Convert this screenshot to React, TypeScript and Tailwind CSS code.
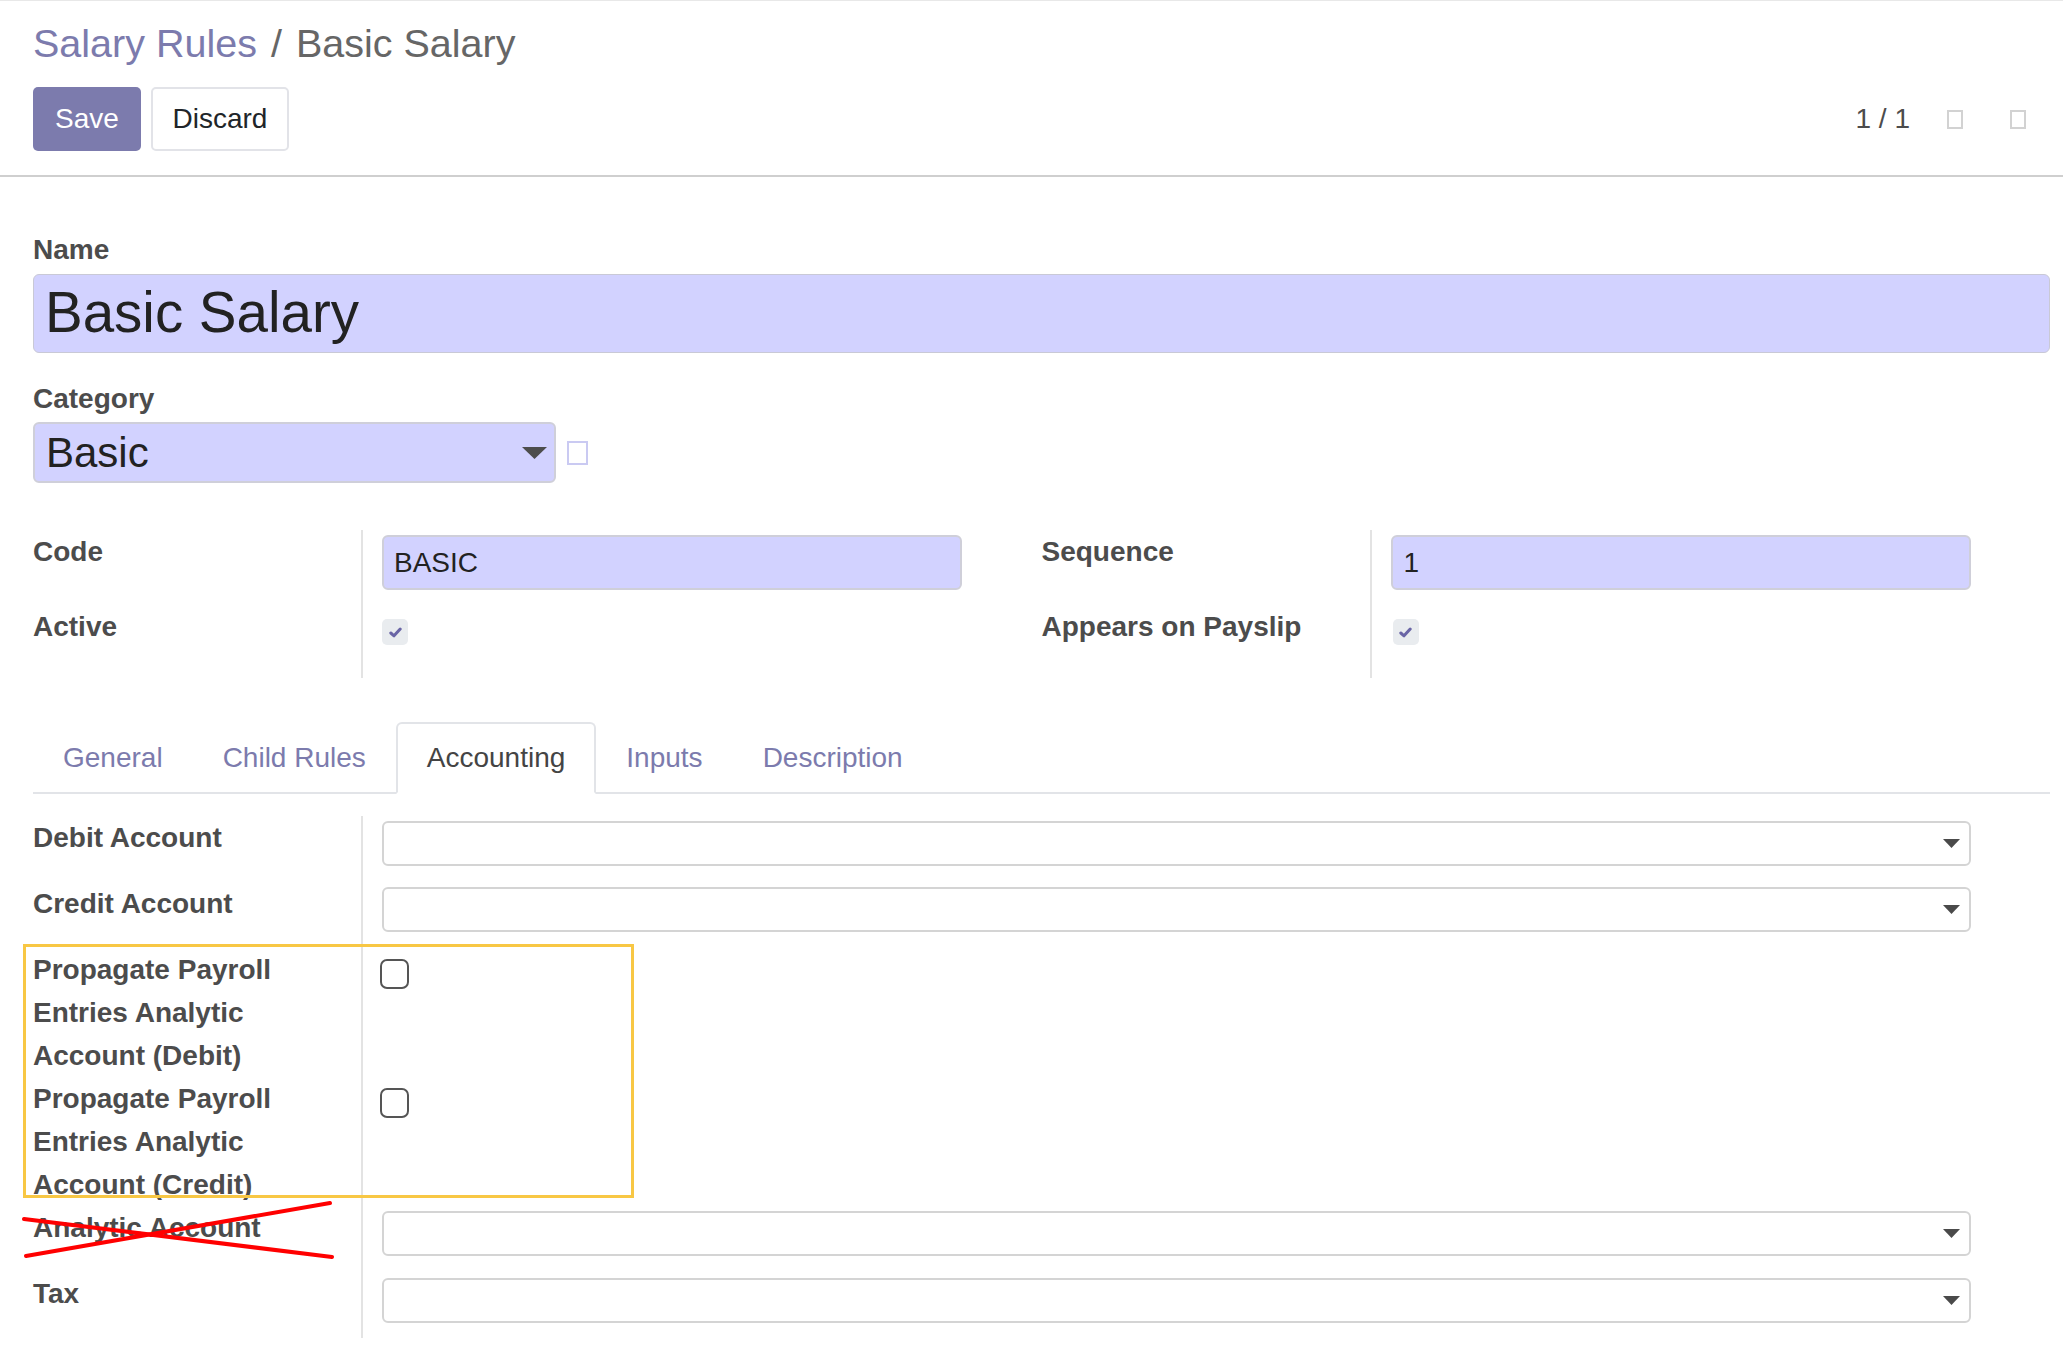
import React from 'react';

const purple = '#7c7bad';

function Caret({ w, h, color }: { w: number; h: number; color: string }) {
    return (
        <svg width={w} height={h} viewBox={`0 0 ${w} ${h}`}>
            <polygon points={`0,0 ${w},0 ${w / 2},${h}`} fill={color} />
        </svg>
    );
}

function Tofu({ className = '' }: { className?: string }) {
    return <div className={`w-[16px] h-[19px] border-2 border-[#d2d2d2] ${className}`} />;
}

function Label({ children }: { children: React.ReactNode }) {
    return (
        <div className="w-[330px] shrink-0 border-r-2 border-[#e3e3e3] pr-[16px] text-[28px] leading-[43px] font-bold text-[#4c4c4c]">
            {children}
        </div>
    );
}

function Many2One({ mt = 'mt-[5px]' }: { mt?: string }) {
    return (
        <div className={`${mt} h-[45px] flex items-center justify-end pr-[9px] bg-white border-2 border-[#d4d4d4] rounded-[6px]`}>
            <Caret w={17} h={9} color="#4a4a4a" />
        </div>
    );
}

function CheckedBox() {
    return (
        <div className="w-[26px] h-[26px] rounded-[5px] bg-[#e9ecef] flex items-center justify-center">
            <svg width="13" height="11" viewBox="0 0 13 11">
                <path d="M1.8 6 L5 8.8 L11.2 2" stroke="#6a65a6" strokeWidth="3" fill="none" strokeLinecap="round" strokeLinejoin="round" />
            </svg>
        </div>
    );
}

function EmptyBox() {
    return <div className="w-[29px] h-[30px] rounded-[7px] border-2 border-[#555555] bg-white" />;
}

export default function App() {
    const tabs = ['General', 'Child Rules', 'Accounting', 'Inputs', 'Description'];

    return (
        <div className="relative min-h-screen bg-white font-['Liberation_Sans',Arial,sans-serif] text-[#212529]">
            {/* control panel */}
            <div className="border-t border-[#e8e8e8] border-b-2 border-b-[#cfcfcf] pl-[33px] pr-[37px] pt-[18px] pb-[24px]">
                <div className="text-[39.5px] leading-[48px] flex">
                    <span style={{ color: purple }}>Salary Rules</span>
                    <span className="mx-[14px] text-[#666666]">/</span>
                    <span className="text-[#666666]">Basic Salary</span>
                </div>
                <div className="mt-[20px] flex items-center justify-between">
                    <div className="flex gap-[10px]">
                        <button className="h-[64px] w-[108px] rounded-[5px] bg-[#7c7bad] text-white text-[28px]">Save</button>
                        <button className="h-[64px] w-[138px] rounded-[5px] bg-white border-2 border-[#e2e3e8] text-[28px] text-[#212529]">Discard</button>
                    </div>
                    <div className="flex items-center">
                        <span className="text-[28px] text-[#4c4c4c]">1 / 1</span>
                        <Tofu className="ml-[37px]" />
                        <Tofu className="ml-[47px]" />
                    </div>
                </div>
            </div>

            {/* form */}
            <div className="pl-[33px] pr-[13px] pt-[52px]">
                <div className="text-[28px] leading-[42px] font-bold text-[#4c4c4c]">Name</div>
                <div className="mt-[3px] h-[79px] flex items-center pl-[11px] bg-[#d2d2ff] border border-[#c9c9d6] rounded-[6px] text-[56.5px] text-[#222222]">
                    Basic Salary
                </div>

                <div className="mt-[25px] text-[28px] leading-[42px] font-bold text-[#4c4c4c]">Category</div>
                <div className="mt-[2px] flex items-center">
                    <div className="w-[523px] h-[61px] flex items-center justify-between pl-[11px] pr-[7px] bg-[#d2d2ff] border-2 border-[#cfcfd9] rounded-[6px] text-[42px] text-[#222222]">
                        <span>Basic</span>
                        <Caret w={25} h={12} color="#4d4d4d" />
                    </div>
                    <div className="ml-[11px] w-[21px] h-[24px] border-2 border-[#cacaf2] bg-white" />
                </div>

                {/* main group */}
                <div className="mt-[47px] grid grid-cols-2">
                    <div>
                        <div className="flex h-[75px]">
                            <Label>Code</Label>
                            <div className="flex-1 pl-[19px] pr-[80px] pt-[5px]">
                                <div className="h-[55px] flex items-center pl-[10px] bg-[#d2d2ff] border-2 border-[#cfcfd9] rounded-[6px] text-[28px] text-[#222222]">
                                    BASIC
                                </div>
                            </div>
                        </div>
                        <div className="flex h-[73px]">
                            <Label>Active</Label>
                            <div className="flex-1 pl-[19px] pt-[14px]">
                                <CheckedBox />
                            </div>
                        </div>
                    </div>
                    <div>
                        <div className="flex h-[75px]">
                            <Label>Sequence</Label>
                            <div className="flex-1 pl-[19px] pr-[79px] pt-[5px]">
                                <div className="h-[55px] flex items-center pl-[11px] bg-[#d2d2ff] border-2 border-[#cfcfd9] rounded-[6px] text-[28px] text-[#222222]">
                                    1
                                </div>
                            </div>
                        </div>
                        <div className="flex h-[73px]">
                            <Label>Appears on Payslip</Label>
                            <div className="flex-1 pl-[21px] pt-[14px]">
                                <CheckedBox />
                            </div>
                        </div>
                    </div>
                </div>

                {/* notebook */}
                <div className="mt-[44px] flex border-b-2 border-[#e2e4e8]">
                    {tabs.map((t) => (
                        <div
                            key={t}
                            className={
                                t === 'Accounting'
                                    ? 'h-[72px] -mb-[2px] px-[29px] flex items-center text-[28px] text-[#444444] bg-white border-2 border-[#e2e4e8] border-b-white rounded-t-[6px]'
                                    : 'h-[72px] -mb-[2px] px-[30px] flex items-center text-[28px] text-[#7c7bad]'
                            }
                        >
                            {t}
                        </div>
                    ))}
                </div>

                <div className="mt-[22px] pb-[16px]">
                    <div className="flex h-[66px]">
                        <Label>Debit Account</Label>
                        <div className="flex-1 pl-[19px] pr-[79px]">
                            <Many2One />
                        </div>
                    </div>
                    <div className="flex h-[66px]">
                        <Label>Credit Account</Label>
                        <div className="flex-1 pl-[19px] pr-[79px]">
                            <Many2One />
                        </div>
                    </div>
                    <div className="flex">
                        <Label>Propagate Payroll Entries Analytic Account (Debit)</Label>
                        <div className="flex-1 pl-[17px] pt-[11px]">
                            <EmptyBox />
                        </div>
                    </div>
                    <div className="flex">
                        <Label>Propagate Payroll Entries Analytic Account (Credit)</Label>
                        <div className="flex-1 pl-[17px] pt-[11px]">
                            <EmptyBox />
                        </div>
                    </div>
                    <div className="flex h-[66px]">
                        <Label>Analytic Account</Label>
                        <div className="flex-1 pl-[19px] pr-[79px]">
                            <Many2One />
                        </div>
                    </div>
                    <div className="flex h-[66px]">
                        <Label>Tax</Label>
                        <div className="flex-1 pl-[19px] pr-[79px]">
                            <Many2One mt="mt-[6px]" />
                        </div>
                    </div>
                </div>
            </div>

            {/* annotations drawn over the form */}
            <div className="absolute left-[23px] top-[944px] w-[611px] h-[254px] border-[3px] border-[#f8c744] pointer-events-none" />
            <svg className="absolute left-0 top-[1190px] pointer-events-none" width="360" height="80" viewBox="0 1190 360 80">
                <line x1="24" y1="1219" x2="332" y2="1257" stroke="#ff0000" strokeWidth="4" strokeLinecap="round" />
                <line x1="26" y1="1256" x2="330" y2="1203" stroke="#ff0000" strokeWidth="4" strokeLinecap="round" />
            </svg>
        </div>
    );
}
